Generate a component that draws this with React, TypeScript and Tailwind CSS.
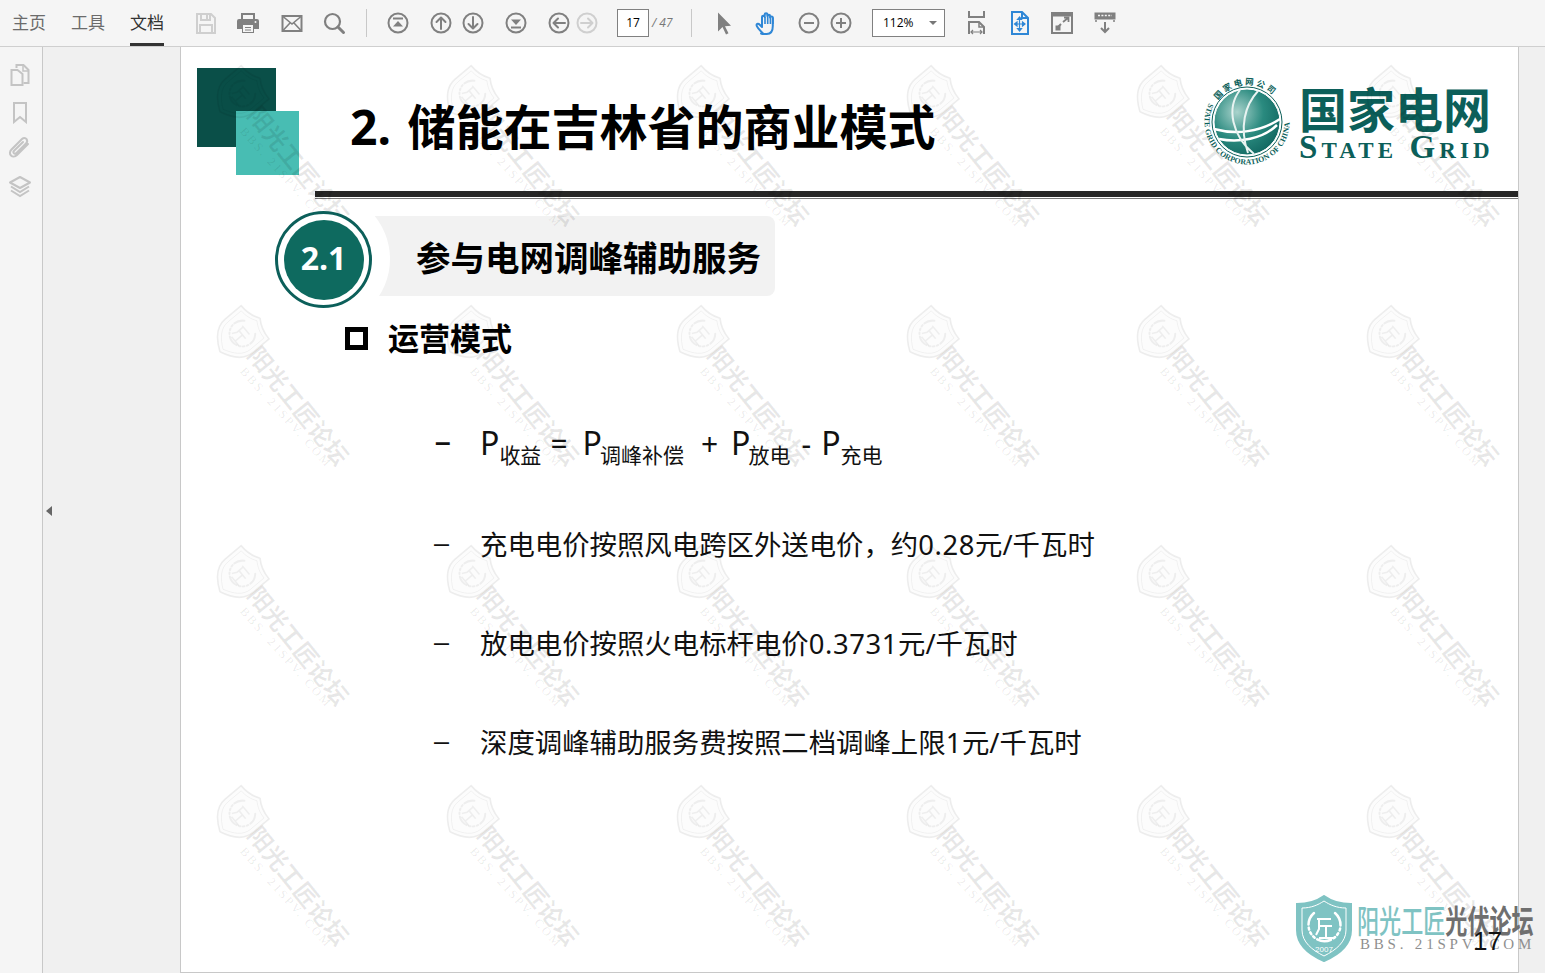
import React from "react";

const G = "#808080";
const cjk = "font-['Noto_Sans','Noto_Sans_CJK_SC',sans-serif]";

function Svg({ children, w = 24, h = 24, cls = "" }: { children: React.ReactNode; w?: number; h?: number; cls?: string }) {
  return (
    <svg width={w} height={h} viewBox={`0 0 ${w} ${h}`} fill="none" className={`shrink-0 ${cls}`}>
      {children}
    </svg>
  );
}

function CircleIcon({ cls = "", color = G, children }: { cls?: string; color?: string; children: React.ReactNode }) {
  return (
    <Svg cls={cls}>
      <circle cx="12" cy="12" r="9.5" stroke={color} strokeWidth="2" />
      <g stroke={color} fill={color}>{children}</g>
    </Svg>
  );
}

function Arrow({ d }: { d: string }) {
  return <path d={d} fill="none" strokeWidth="2" strokeLinecap="round" strokeLinejoin="round" />;
}

function Toolbar() {
  return (
    <div className={`flex items-center h-[47px] bg-[#f5f5f5] border-b border-[#cfcfcf] pl-3 ${cjk}`}>
      <span className="w-[34px] text-[17px] leading-[46px] text-[#6b6b6b] whitespace-nowrap">主页</span>
      <span className="ml-[25px] w-[34px] text-[17px] leading-[46px] text-[#6b6b6b] whitespace-nowrap">工具</span>
      <span className="ml-[25px] w-[34px] h-[46px] text-[17px] leading-[46px] text-[#333] border-b-[3px] border-[#333] whitespace-nowrap">文档</span>

      <Svg cls="ml-[30px]">
        <path d="M3 3h14l4 4v15H3z" stroke="#cfcfcf" strokeWidth="2" />
        <path d="M7 3v6h9V3M6 21v-7h12v7" stroke="#cfcfcf" strokeWidth="2" />
        <path d="M13 4v4" stroke="#cfcfcf" strokeWidth="2" />
      </Svg>
      <Svg cls="ml-[18px]">
        <path d="M6 8V3h12v5" stroke={G} strokeWidth="2" />
        <path d="M3 8h18a2 2 0 0 1 2 2v8h-5v4H6v-4H1v-8a2 2 0 0 1 2-2z" fill={G} />
        <rect x="7" y="14" width="10" height="7" fill="#f5f5f5" />
        <path d="M9 16.5h6M9 19h6" stroke={G} strokeWidth="1.2" />
        <circle cx="19.5" cy="11" r="1" fill="#f5f5f5" />
      </Svg>
      <Svg cls="ml-[20px]">
        <rect x="2.5" y="5" width="19" height="15" stroke={G} strokeWidth="2" />
        <path d="M3 5.5 12 13l9-7.5M3 19.5l7-7.5M21 19.5 14 12" stroke={G} strokeWidth="1.6" />
      </Svg>
      <Svg cls="ml-[18px]">
        <circle cx="10.5" cy="10.5" r="7.5" stroke={G} strokeWidth="2.2" />
        <path d="m16 16 5.5 5.5" stroke={G} strokeWidth="3" strokeLinecap="round" />
      </Svg>
      <div className="ml-[20px] w-px h-[28px] bg-[#c8c8c8]" />

      <CircleIcon cls="ml-[19px]">
        <path d="M7 7.500h10" strokeWidth="2" fill="none" />
        <path d="M12 10l5 5.500H7z" stroke="none" />
      </CircleIcon>
      <CircleIcon cls="ml-[19px]"><Arrow d="M12 18V7M7.500 11 12 6.500l4.500 4.500" /></CircleIcon>
      <CircleIcon cls="ml-[8px]"><Arrow d="M12 6v11M7.500 13l4.500 4.500 4.500-4.500" /></CircleIcon>
      <CircleIcon cls="ml-[19px]">
        <path d="M12 14 7 8.500h10z" stroke="none" />
        <path d="M7 16.500h10" strokeWidth="2" fill="none" />
      </CircleIcon>
      <CircleIcon cls="ml-[19px]"><Arrow d="M18 12H7M11 7.500 6.500 12l4.500 4.500" /></CircleIcon>
      <CircleIcon cls="ml-[4px]" color="#cfcfcf"><Arrow d="M6 12h11M13 7.500l4.500 4.500-4.500 4.500" /></CircleIcon>

      <div className="ml-[18px] w-[32px] h-[28px] bg-white border border-[#808080] flex items-center justify-center text-[12px] text-black font-['Open_Sans',sans-serif]">17</div>
      <span className="ml-[3px] w-[22px] text-[12px] text-[#777] italic whitespace-nowrap font-['Open_Sans',sans-serif]">/ 47</span>
      <div className="ml-[17px] w-px h-[28px] bg-[#c8c8c8]" />

      <Svg cls="ml-[20px]">
        <path d="M6 1.500v19l4.500-4.500 3.500 7.500 2.500-1.200-3.500-7 6-.5z" fill={G} />
      </Svg>
      <Svg cls="ml-[18px]" w={26} h={26}>
        <path d="M9 23.500c-2-2-6.500-6.500-6.500-8.500 0-1.500 2-1.700 3-.5l2.500 2.500V7c0-1.600 2.700-1.600 2.700 0V4.500c0-1.600 2.700-1.600 2.700 0V6c0-1.600 2.700-1.600 2.700 0v1.500c0-1.500 2.700-1.500 2.700 0V16c0 4.500-2 8-6 8h-3c-1 0-2-.2-2.800-.5z" stroke="#2f87d6" strokeWidth="2" strokeLinejoin="round" />
        <path d="M11 7v7M13.700 5v9M16.400 6v8M19 7.500V14" stroke="#2f87d6" strokeWidth="1.600" />
      </Svg>
      <CircleIcon cls="ml-[17px]"><path d="M7 12h10" strokeWidth="2" fill="none" /></CircleIcon>
      <CircleIcon cls="ml-[8px]"><path d="M7 12h10M12 7v10" strokeWidth="2" fill="none" /></CircleIcon>

      <div className="ml-[19px] w-[73px] h-[28px] bg-white border border-[#808080] flex items-center pl-[10px] pr-[7px] justify-between">
        <span className="text-[12px] text-black font-['Open_Sans',sans-serif]">112%</span>
        <span className="w-0 h-0 border-x-[4px] border-x-transparent border-t-[4px] border-t-[#777]" />
      </div>

      <Svg cls="ml-[19px]" h={26}>
        <path d="M5 1v6h15V1" stroke={G} strokeWidth="2" fill="none" />
        <path d="M5 24v-12h10l5 5v7" stroke={G} strokeWidth="2" />
        <path d="M15 12v5h5" stroke={G} strokeWidth="1.500" />
        <path d="M7 22h11M9 20l-2 2 2 2M16 20l2 2-2 2" stroke={G} strokeWidth="1.200" />
      </Svg>
      <Svg cls="ml-[19px]" h={26}>
        <path d="M5 2h10l6 6v16H5z" stroke="#2f87d6" strokeWidth="2" fill="none" />
        <path d="M15 2v6h6" stroke="#2f87d6" strokeWidth="2" />
        <path d="M12.500 7v14M8 14h9.500M12.500 7l-2 2.500h4zM12.500 21l-2-2.500h4zM7.500 14l2.500-2v4zM18 14l-2.500-2v4z" stroke="#2f87d6" strokeWidth="1.200" fill="#2f87d6" />
      </Svg>
      <Svg cls="ml-[19px]">
        <rect x="2" y="2" width="20" height="20" stroke={G} strokeWidth="2" />
        <rect x="2" y="2" width="20" height="3.500" fill={G} />
        <path d="M13 11l5-4M14 6.500h4.500V11" stroke={G} strokeWidth="1.800" />
        <path d="M5.500 19.500v-5h5v5z" fill={G} />
        <path d="M8 16l3-3" stroke={G} strokeWidth="2" />
      </Svg>
      <Svg cls="ml-[19px]">
        <rect x="1.500" y="1.500" width="21" height="7" fill={G} />
        <path d="M5 4.500h14" stroke="#f5f5f5" strokeWidth="1.500" strokeDasharray="2 1.400" />
        <path d="M3 9v2M21 9v2" stroke={G} strokeWidth="1.500" />
        <path d="M12 11v10M8 17l4 4 4-4" stroke={G} strokeWidth="2" />
      </Svg>
    </div>
  );
}

function Rail() {
  const c = "#c4c4c4";
  return (
    <div className="w-[43px] shrink-0 bg-[#f5f5f5] border-r border-[#c8c8c8] flex flex-col items-center pt-[16px] pr-[2px]">
      <Svg>
        <path d="M8.500 5V2h7l5 5v13h-5" stroke={c} strokeWidth="2" />
        <path d="M15 2.500V8h5.500" stroke={c} strokeWidth="1.500" />
        <path d="M3.500 7h6l5 4v11h-11z" stroke={c} strokeWidth="2" />
      </Svg>
      <Svg cls="mt-[13px]">
        <path d="M6 3h12v19l-6-5-6 5z" stroke={c} strokeWidth="2" />
      </Svg>
      <Svg cls="mt-[12px]">
        <path d="M20 8 9 19c-2 2-4.500 2-6 .5s-1.500-4 .5-6L14 3c1.500-1.500 3.500-1.500 4.500 0s1 3-.5 4.500L8.500 17c-1 1-2 1-2.700.2s-.5-1.700.5-2.700L15 6" stroke={c} strokeWidth="2" strokeLinecap="round" />
      </Svg>
      <Svg cls="mt-[15px]">
        <path d="M12 2 22 7.500 12 13 2 7.500z" stroke={c} strokeWidth="2" strokeLinejoin="round" />
        <path d="M3 11.500 12 17l9-5.500M3 15.500 12 21l9-5.500" stroke={c} strokeWidth="2" />
      </Svg>
    </div>
  );
}

function Shield({ stroke, fill, detail, w = 48, h = 50, label, cls = "" }: { stroke: string; fill: string; detail: string; w?: number; h?: number; label?: boolean; cls?: string }) {
  return (
    <svg width={w} height={h} viewBox="0 0 58 67" fill="none" className={`shrink-0 ${cls}`}>
      <path d="M29 1C22 6 12 9 2 9v26c0 15 13 25 27 31 14-6 27-16 27-31V9C46 9 36 6 29 1z" fill={fill} stroke={stroke} strokeWidth="2" />
      <path d="M7 13c9 0 16-3 22-7 6 4 13 7 22 7v22c0 12-10 20-22 26C17 55 7 47 7 35z" stroke={detail} strokeWidth="1" />
      <path d="M40 18a16 16 0 1 1-21 0" stroke={detail} strokeWidth="2.500" strokeLinecap="round" strokeDasharray="14 3 2 3 2 3 2 3" />
      <path d="M22 24h14M24 24v10l-3 6M24 31h13M31 31v12M24 43h14" stroke={detail} strokeWidth="2" />
      {label && <text x="29" y="57" textAnchor="middle" fontSize="8" fill={detail} fontFamily="Liberation Sans">2007</text>}
    </svg>
  );
}

function Watermark() {
  return (
    <div className="relative w-[230px] h-[240px]">
      <Shield stroke="rgba(0,0,0,.065)" fill="rgba(0,0,0,.012)" detail="rgba(0,0,0,.055)" w={50} h={54} cls="rotate-[50deg] -ml-[2px] mt-[1px]" />
      <div className="absolute left-[47px] top-[34px] origin-top-left rotate-[51deg] text-[24px] leading-[26px] font-bold text-black/[.09] whitespace-nowrap font-['Noto_Sans_CJK_SC',sans-serif]">阳光工匠论坛</div>
      <div className="absolute left-[30px] top-[58px] origin-top-left rotate-[48deg] text-[12px] leading-[13px] tracking-[2.400px] text-black/[.09] whitespace-nowrap font-['Liberation_Serif',serif]">BBS. 21SPV. COM</div>
    </div>
  );
}

function Logo() {
  return (
    <div className="ml-auto flex items-center mr-[26px] -mt-[15px]">
      <svg width="86" height="86" viewBox="0 0 86 86" className="shrink-0 overflow-visible">
        <defs>
          <radialGradient id="gl" cx=".35" cy=".35" r=".8">
            <stop offset="0" stopColor="#a9d3cc" />
            <stop offset=".5" stopColor="#2a8a7f" />
            <stop offset="1" stopColor="#0c5f5a" />
          </radialGradient>
          <path id="ringTop" d="M14 21.500A36 36 0 0 1 73 21" />
          <path id="ringBot" d="M5 24A42.500 42.500 0 1 0 81 24" />
        </defs>
        <circle cx="43" cy="43" r="33" fill="url(#gl)" stroke="#fff" strokeWidth="1" />
        <circle cx="43" cy="43" r="35" fill="none" stroke="#0c5f5a" strokeWidth="1" />
        <path d="M10 50c22 6 46 3 66-10M15 60c20 4 44 0 58-14" stroke="#fff" strokeWidth="2.500" fill="none" />
        <path d="M36 11c-14 18-8 46 14 64M54 12c-13 14-19 36-10 62" stroke="#e8f3f1" strokeWidth="2" fill="none" />
        <text fontSize="8.500" fontWeight="700" fill="#0c5f5a" fontFamily="Noto Sans CJK SC, sans-serif" letterSpacing="2.200">
          <textPath href="#ringTop">国家电网公司</textPath>
        </text>
        <text fontSize="7.800" fontWeight="700" fill="#0c5f5a" fontFamily="Liberation Serif, serif" letterSpacing=".15">
          <textPath href="#ringBot">STATE GRID CORPORATION OF CHINA</textPath>
        </text>
      </svg>
      <div className="ml-[9px] -mt-[2px] w-[193px] flex flex-col text-[#0c5f5a]">
        <span className="text-[48px] leading-[50px] font-bold whitespace-nowrap font-['Noto_Sans_CJK_SC',sans-serif]">国家电网</span>
        <span className="mt-[2px] text-[33px] leading-[27px] font-bold whitespace-nowrap tracking-[4.100px] [font-variant:small-caps] font-['Liberation_Serif',serif]">State Grid</span>
      </div>
    </div>
  );
}

function Sub({ children, cls = "" }: { children: React.ReactNode; cls?: string }) {
  return <span className={`text-[21px] leading-[24px] translate-y-[8px] ${cls}`}>{children}</span>;
}

function Line({ children, mt }: { children: React.ReactNode; mt: string }) {
  return (
    <div className={`flex items-center h-[40px] pl-[253px] text-[27.400px] text-[#111] whitespace-nowrap ${mt}`}>
      <span className="w-[46px] text-[27px] -translate-y-[2px] font-['Liberation_Sans',sans-serif]">–</span>
      <span>{children}</span>
    </div>
  );
}

function Num({ children }: { children: React.ReactNode }) {
  return <span className="tracking-[.6px]">{children}</span>;
}

function Page() {
  return (
    <div className={`relative flex-1 bg-white border-b border-[#c8c8c8] ${cjk}`}>
      <div className="flex h-[144px] pl-[16px] pt-[21px]">
        <div className="relative w-[102px] h-[107px] shrink-0">
          <div className="w-[79px] h-[79px] bg-[#0a4f48]" />
          <div className="absolute left-[39px] top-[43px] w-[63px] h-[64px] bg-[#48bdb3]" />
        </div>
        <h1 className="ml-[51px] mt-[26px] h-[66px] text-[48px] leading-[66px] font-bold text-black whitespace-nowrap">
          <span className="mr-[4px]">2.</span> 储能在吉林省的商业模式
        </h1>
        <Logo />
      </div>

      <div className="ml-[134px] h-[8px] border-t-[6px] border-b border-t-[#262626] border-b-[#777]" />

      <div className="flex items-center ml-[94px] mt-[12px] h-[97px]">
        <div className="z-10 w-[97px] h-[97px] shrink-0 rounded-full bg-white border-[3px] border-[#0c5f5a] flex items-center justify-center">
          <div className="w-[80px] h-[80px] rounded-full bg-[#0e6a5f] flex items-center justify-center pb-[3px] text-white text-[32px] font-bold font-['Open_Sans',sans-serif]">2.1</div>
        </div>
        <div className="relative -ml-[45px] mb-[7px] w-[448px] h-[80px] bg-[#f2f2f2] rounded-r-[8px] overflow-hidden flex items-center pl-[89px]">
          <div className="absolute -left-[73px] -top-[25px] w-[136px] h-[136px] rounded-full bg-white" />
          <span className="relative mt-[3px] text-[34.500px] font-bold text-black whitespace-nowrap">参与电网调峰辅助服务</span>
        </div>
      </div>

      <div className="flex items-center h-[40px] mt-[10px] pl-[164px]">
        <span className="w-[23px] h-[23px] border-[5px] border-black" />
        <span className="ml-[20px] text-[31px] font-bold text-black whitespace-nowrap">运营模式</span>
      </div>

      <div className="flex items-baseline h-[40px] mt-[61px] pl-[254px] text-[#111] whitespace-nowrap">
        <span className="w-[45px] text-[28px] font-bold -translate-y-[4px] font-['Liberation_Sans',sans-serif]">–</span>
        <span className="text-[32px]">P</span>
        <Sub>收益</Sub>
        <span className="ml-[9px] text-[30px]">=</span>
        <span className="ml-[15px] text-[32px]">P</span>
        <Sub cls="-ml-[2px]">调峰补偿</Sub>
        <span className="ml-[17px] text-[30px]">+</span>
        <span className="ml-[13px] text-[32px]">P</span>
        <Sub cls="-ml-[2px]">放电</Sub>
        <span className="ml-[11px] text-[30px]">-</span>
        <span className="ml-[10px] text-[32px]">P</span>
        <Sub>充电</Sub>
      </div>

      <Line mt="mt-[66px]">充电电价按照风电跨区外送电价，约<Num>0.28</Num>元/千瓦时</Line>
      <Line mt="mt-[59px]">放电电价按照火电标杆电价<Num>0.3731</Num>元/千瓦时</Line>
      <Line mt="mt-[59px]">深度调峰辅助服务费按照二档调峰上限<Num>1</Num>元/千瓦时</Line>

      <div className="absolute inset-0 pl-[36px] pt-[20px] grid grid-cols-[repeat(6,230px)] grid-rows-[repeat(4,240px)] pointer-events-none">
        {Array.from({ length: 24 }).map((_, i) => (
          <Watermark key={i} />
        ))}
      </div>

      <div className="absolute left-[1114px] top-[848px] flex items-start">
        <Shield stroke="#7fc3c3" fill="#7fc3c3" detail="#fff" w={58} h={67} label />
        <div className="ml-[4px] mt-[5px] flex flex-col w-[180px]">
          <div className="flex text-[32px] leading-[38px] font-['Noto_Sans_CJK_SC',sans-serif] font-medium origin-top-left scale-x-[.69] whitespace-nowrap w-[256px]">
            <span className="text-[#7fc3c3]">阳光工匠</span>
            <span className="text-[#6f6f6f] font-bold">光伏论坛</span>
          </div>
          <span className="ml-[3px] text-[15px] leading-[13px] tracking-[3.800px] text-[#8f8f8f] whitespace-nowrap font-['Liberation_Serif',serif]">BBS. 21SPV. COM</span>
        </div>
      </div>
      <span className="absolute left-[1292px] top-[876px] text-[26px] leading-[36px] text-[#111] font-['Liberation_Sans',sans-serif]">17</span>
    </div>
  );
}

export default function App() {
  return (
    <div className="w-[1545px] h-[973px] flex flex-col overflow-hidden bg-[#f0f0f0]">
      <Toolbar />
      <div className="flex flex-1 min-h-0">
        <Rail />
        <div className="relative w-[138px] shrink-0 bg-[#f0f0f0] border-r border-[#c8c8c8] flex items-center">
          <span className="ml-[3px] mt-[2px] w-0 h-0 border-y-[5px] border-y-transparent border-r-[6px] border-r-[#666]" />
        </div>
        <Page />
        <div className="w-[27px] shrink-0 bg-[#f0f0f0] border-l border-[#c8c8c8]" />
      </div>
    </div>
  );
}
